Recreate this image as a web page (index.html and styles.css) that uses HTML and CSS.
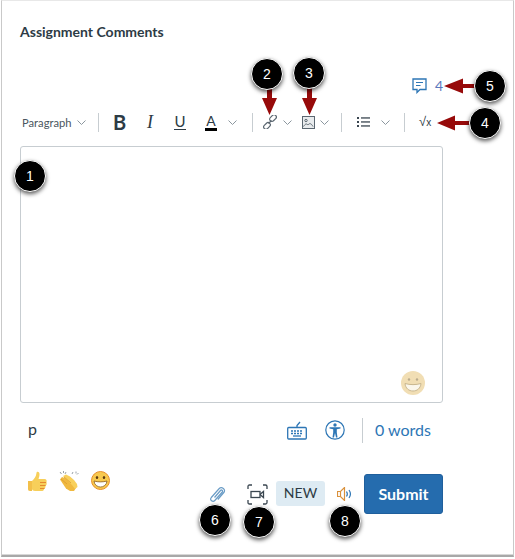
FILE: index.html
```html
<!DOCTYPE html>
<html lang="en">

<head>
    <meta charset="UTF-8">
    <title>Assignment Comments</title>
    <link rel="stylesheet" href="styles.css">
</head>

<body>
    <div class="panel">
        <h2 class="title">Assignment Comments</h2>

        <div class="count-row">
            <svg class="comment-icon" width="15" height="16" viewBox="0 0 15 16">
                <path d="M1 1h13v10.500H8l-3 3v-3H1z" fill="none" stroke="#2d76b5" stroke-width="1.300" />
                <path d="M4 4.500h7M4 7.500h4.500" stroke="#2d76b5" stroke-width="1.200" />
            </svg>
            <span class="count">4</span>
        </div>

        <div class="toolbar">
            <span class="format">Paragraph</span>
            <svg class="chev chev-format" width="9" height="5" viewBox="0 0 9 5"><path d="M.5.500l4 4 4-4" /></svg>
            <i class="sep sep-a"></i>
            <span class="tool-b">B</span>
            <span class="tool-i">I</span>
            <span class="tool-u">U</span>
            <span class="tool-a">A</span>
            <svg class="chev chev-a" width="9" height="5" viewBox="0 0 9 5"><path d="M.5.500l4 4 4-4" /></svg>
            <i class="sep sep-b"></i>
            <svg class="tool-link" width="14" height="14" viewBox="0 0 14 14" fill="none" stroke="#5a6670" stroke-width="1.200">
                <rect x="6.200" y=".8" width="7.500" height="4.500" rx="2.200" transform="rotate(-45 10 3)" />
                <rect x=".3" y="8.700" width="7.500" height="4.500" rx="2.200" transform="rotate(-45 4 11)" />
                <path d="M5.500 8.500l3-3" />
            </svg>
            <svg class="chev chev-link" width="9" height="5" viewBox="0 0 9 5"><path d="M.5.500l4 4 4-4" /></svg>
            <svg class="tool-image" width="13" height="13" viewBox="0 0 13 13" fill="none" stroke="#5a6670">
                <rect x=".5" y=".5" width="12" height="12" fill="#e8ebed" />
                <circle cx="4" cy="4.500" r="1.200" />
                <path d="M1.500 10.500c2-3 3-3 4.500-1.500 1.500-2 3-2 5 1.500" />
            </svg>
            <svg class="chev chev-image" width="9" height="5" viewBox="0 0 9 5"><path d="M.5.500l4 4 4-4" /></svg>
            <i class="sep sep-c"></i>
            <svg class="tool-list" width="13" height="10" viewBox="0 0 13 10" fill="#3a4650">
                <rect y="0" width="2" height="2" /><rect x="4" y=".3" width="9" height="1.300" />
                <rect y="4" width="2" height="2" /><rect x="4" y="4.300" width="9" height="1.300" />
                <rect y="8" width="2" height="2" /><rect x="4" y="8.300" width="9" height="1.300" />
            </svg>
            <svg class="chev chev-list" width="9" height="5" viewBox="0 0 9 5"><path d="M.5.500l4 4 4-4" /></svg>
            <i class="sep sep-d"></i>
            <span class="tool-math">&radic;<small>x</small></span>
        </div>

        <div class="editor">
            <svg class="editor-emoji" width="24" height="24" viewBox="0 0 24 24">
                <circle cx="12" cy="12" r="12" fill="#f1deb4" />
                <circle cx="8" cy="8.500" r="1.200" fill="#b9ab8c" />
                <circle cx="16" cy="8.500" r="1.200" fill="#b9ab8c" />
                <path d="M4 12.500c5 1.500 11 1.500 16 0-.5 5-4 7.500-8 7.500s-7.500-2.500-8-7.500z" fill="#fbf7ec" stroke="#c9b78f" />
            </svg>
        </div>

        <div class="status">
            <span class="path">p</span>
            <svg class="keyboard" width="20" height="19" viewBox="0 0 20 19" fill="none" stroke="#2d76b5">
                <rect x=".7" y="6.500" width="18.600" height="11.500" rx="1" stroke-width="1.300" />
                <path d="M10 6.500V4.500L13 1" stroke-width="1.300" />
                <path d="M4 10h12M4 12.500h12" stroke-width="1.500" stroke-dasharray="2 1" />
                <path d="M6 15h8" stroke-width="1.300" />
            </svg>
            <svg class="access" width="20" height="20" viewBox="0 0 20 20">
                <circle cx="10" cy="10" r="9.200" fill="none" stroke="#2d76b5" stroke-width="1.200" />
                <circle cx="10" cy="5" r="1.700" fill="#2d76b5" />
                <path d="M4.500 7.200h11v1.300l-3.700.7v3.300l.7 5h-1.500L10 13l-1 4.500H7.500l.7-5V9.200L4.500 8.500z" fill="#2d76b5" />
            </svg>
            <i class="status-sep"></i>
            <span class="words">0 words</span>
        </div>

        <div class="actions">
            <div class="reactions">
                <svg width="20" height="21" viewBox="0 0 20 21">
                    <path d="M1 10h4v10H3c-1.500 0-2-1-2-2z" fill="#f3c04a" />
                    <path d="M5 10c2-2 4-4 4.500-8 0-2 3-1.500 3 1 0 2-.5 3.500-1 5h6c2 0 2.500 1.500 2 3 .5 2 0 3-1 4 0 1.500-.5 2.500-1.500 3 0 1.500-1 2-2.500 2H8c-1.500 0-3-1-3-2z" fill="#f7cf5a" />
                    <path d="M13 11.500h6M13 14.500h5.500M13 17.500h4.500" stroke="#e58a2e" stroke-width="1" />
                </svg>
                <svg width="20" height="20" viewBox="0 0 20 20">
                    <path d="M1 8.500L3 6l4 1.500 5 3.500 4 3 1 3-2 3h-4l-4-2.500z" fill="#f0b93f" />
                    <path d="M4 5l3-1.500 4 2 4 3.500 3 4 .5 3-2.500 2-3-4z" fill="#f8d05c" />
                    <path d="M2 8l6 5M5 6l7 6" stroke="#dd9a30" stroke-width=".8" fill="none" />
                    <path d="M1 1l1.500 2M4.500 0v2M7 1L6 3M14 1l-1 2M17 .5v2M19.500 2L18 3.500" stroke="#9aa2a8" stroke-width="1" />
                </svg>
                <svg width="19" height="19" viewBox="0 0 19 19">
                    <circle cx="9.500" cy="9.500" r="9" fill="#f8c94e" stroke="#e88f2c" />
                    <ellipse cx="6" cy="6.500" rx="1.200" ry="1.500" fill="#5c3a12" />
                    <ellipse cx="13" cy="6.500" rx="1.200" ry="1.500" fill="#5c3a12" />
                    <path d="M3 10c4 1.200 9 1.200 13 0-.3 4-3.500 6-6.500 6S3.300 14 3 10z" fill="#fff" stroke="#8a5a1c" stroke-width=".8" />
                </svg>
            </div>

            <div class="send">
                <svg class="clip" width="18" height="16" viewBox="0 0 18 16" fill="none" stroke="#6a9cc6" stroke-width="1.200">
                    <path d="M6.500 10.500l6-7c1-1.200 2.800.2 1.800 1.500l-7.500 8.500c-2 2.200-5.500-.5-3.500-3l7.500-8.500c3-3 7.500.5 5 3.500l-6 7" />
                </svg>
                <svg class="video" width="21" height="21" viewBox="0 0 21 21" fill="none" stroke="#3a4650" stroke-width="1.300">
                    <path d="M1 5V2.500C1 1.500 1.500 1 2.500 1H5M16 1h2.500c1 0 1.500.5 1.500 1.500V5M20 16v2.500c0 1-.5 1.500-1.500 1.500H16M5 20H2.500C1.500 20 1 19.500 1 18.500V16" />
                    <rect x="4" y="7.500" width="9" height="6" />
                    <path d="M13.500 10l3-2.500v6l-3-2.500z" />
                </svg>
                <span class="new-tag">NEW</span>
                <svg class="speaker" width="16" height="14" viewBox="0 0 16 14" fill="none" stroke-width="1.200">
                    <path d="M.5 4.500h3l4-4v13l-4-4h-3z" stroke="#d9913c" />
                    <path d="M3.500 4.500v5" stroke="#d9913c" />
                    <path d="M9.500 4.500c1 1.500 1 3.500 0 5M12 3c1.800 2.500 1.800 5.500 0 8" stroke="#2d76b5" />
                </svg>
                <button class="submit">Submit</button>
            </div>
        </div>

        <!-- callout arrows and numbers -->
        <svg class="arrows" width="513" height="556" viewBox="0 0 513 556" fill="#970a0a">
            <path d="M267 88h5v10h5l-7.500 17-7.500-17h5z" />
            <path d="M307 88h5v10h5l-7.500 17-7.500-17h5z" />
            <path d="M476 84v4h-13v5.500L444 86l19-7.500V84z" />
            <path d="M470 121v4h-15v5.500L437 123l18-7.500v5.500z" />
        </svg>
        <span class="mark mark-1">1</span>
        <span class="mark mark-2">2</span>
        <span class="mark mark-3">3</span>
        <span class="mark mark-4">4</span>
        <span class="mark mark-5">5</span>
        <span class="mark mark-6">6</span>
        <span class="mark mark-7">7</span>
        <span class="mark mark-8">8</span>
    </div>
</body>

</html>
```
FILE: styles.css
```css
* {
    box-sizing: border-box;
    margin: 0;
    padding: 0;
}

body {
    background-color: #fff;
    font-family: Lato, "Open Sans", sans-serif;
    color: #2d3b45;
}

.panel {
    position: relative;
    width: 513px;
    height: 557px;
    margin-left: 1px;
    padding: 23px 70px 0 18px;
    background-color: #fff;
    border: 1px solid #c9c9c9;
    border-top-color: #e8e8e8;
    border-bottom: 2px solid #a8a8a8;
    box-shadow: inset 0 -1px 0 #d8d8d8;
}

.title {
    height: 16px;
    font-size: 14px;
    line-height: 16px;
    font-weight: 700;
}

/* comment count */
.count-row {
    display: flex;
    justify-content: flex-end;
    align-items: center;
    gap: 8px;
    height: 17px;
    margin-top: 37px;
}

.comment-icon {
    display: block;
}

.count {
    font-size: 14px;
    line-height: 17px;
    color: #5c78bd;
}

/* toolbar */
.toolbar {
    display: flex;
    align-items: center;
    height: 22px;
    margin-top: 17px;
    margin-left: 2px;
}

.format {
    width: 49px;
    font-size: 11.200px;
    color: #4a5660;
    white-space: nowrap;
}

.chev {
    flex: none;
    fill: none;
    stroke: #8b969e;
}

.chev-format {
    margin-left: 6px;
}

.sep {
    flex: none;
    width: 1px;
    height: 19px;
    background-color: #c7cdd1;
}

.sep-a {
    margin-left: 12px;
}

.tool-b {
    margin-left: 14px;
    width: 12px;
    font-size: 20px;
    font-weight: 700;
    line-height: 22px;
}

.tool-i {
    margin-left: 20px;
    width: 10px;
    font-family: "Liberation Serif", serif;
    font-size: 18px;
    font-style: italic;
    line-height: 22px;
    text-align: center;
}

.tool-u {
    margin-left: 19px;
    width: 12px;
    font-size: 15px;
    line-height: 15px;
    text-align: center;
    border-bottom: 1px solid #2d3b45;
}

.tool-a {
    margin-left: 19px;
    width: 12px;
    font-size: 14px;
    font-weight: 400;
    line-height: 15px;
    text-align: center;
    border-bottom: 3px solid #000;
}

.chev-a {
    margin-left: 11px;
}

.sep-b {
    margin-left: 15px;
}

.tool-link {
    flex: none;
    margin-left: 10px;
}

.chev-link {
    margin-left: 6px;
}

.tool-image {
    flex: none;
    margin-left: 10px;
}

.chev-image {
    margin-left: 5px;
}

.sep-c {
    margin-left: 12px;
}

.tool-list {
    flex: none;
    margin-left: 15px;
}

.chev-list {
    margin-left: 11px;
}

.sep-d {
    margin-left: 14px;
}

.tool-math {
    margin-left: 14px;
    font-family: "Liberation Sans", sans-serif;
    font-size: 13px;
    line-height: 22px;
    white-space: nowrap;
}

.tool-math small {
    font-size: 10px;
}

/* editor */
.editor {
    display: flex;
    justify-content: flex-end;
    align-items: flex-end;
    height: 257px;
    margin-top: 13px;
    padding: 0 17px 7px 0;
    background-color: #fff;
    border: 1px solid #c7cdd1;
    border-radius: 3px;
}

.editor-emoji {
    display: block;
}

/* status row */
.status {
    display: flex;
    align-items: center;
    height: 26px;
    margin-top: 14px;
    padding-left: 8px;
}

.path {
    width: 259px;
    padding-bottom: 2px;
    font-size: 16px;
    line-height: 20px;
}

.keyboard {
    flex: none;
}

.access {
    flex: none;
    margin-left: 18px;
}

.status-sep {
    flex: none;
    width: 1px;
    height: 25px;
    margin-left: 17px;
    background-color: #c7cdd1;
}

.words {
    margin-left: 12px;
    padding-bottom: 2px;
    font-size: 16px;
    color: #2d76b5;
    white-space: nowrap;
}

/* bottom row */
.actions {
    display: flex;
    justify-content: space-between;
    align-items: flex-start;
    margin-top: 30px;
}

.reactions {
    display: flex;
    gap: 12px;
    margin-left: 7px;
    margin-top: -2px;
}

.reactions svg {
    display: block;
}

.send {
    display: flex;
    align-items: flex-start;
    margin-top: 1px;
}

.clip {
    flex: none;
    margin-top: 13px;
}

.video {
    flex: none;
    margin-top: 10px;
    margin-left: 21px;
}

.new-tag {
    width: 49px;
    height: 25px;
    margin-top: 7px;
    margin-left: 8px;
    font-size: 14px;
    line-height: 23px;
    text-align: center;
    background-color: #deebf3;
    border-radius: 3px;
}

.speaker {
    flex: none;
    margin-top: 13px;
    margin-left: 12px;
}

.submit {
    width: 79px;
    height: 40px;
    margin-left: 11px;
    padding-bottom: 2px;
    font-family: Lato, "Open Sans", sans-serif;
    font-size: 16px;
    font-weight: 700;
    color: #fff;
    background-color: #256cae;
    border: 1px solid #1f5f9c;
    border-radius: 3px;
}

/* callouts over the page */
.arrows {
    position: absolute;
    left: -2px;
    top: -1px;
}

.mark {
    position: absolute;
    width: 32px;
    height: 32px;
    font-family: "Liberation Sans", sans-serif;
    font-size: 14px;
    line-height: 30px;
    text-align: center;
    color: #fff;
    background-color: #000;
    border: 1px solid #fff;
    border-radius: 50%;
    box-shadow: 0 2px 4px rgba(0, 0, 0, .65);
}

.mark-1 { left: 12px; top: 159px; }
.mark-2 { left: 249px; top: 57px; }
.mark-3 { left: 291px; top: 56px; }
.mark-4 { left: 467px; top: 106px; }
.mark-5 { left: 472px; top: 69px; }
.mark-6 { left: 197px; top: 503px; }
.mark-7 { left: 241px; top: 505px; }
.mark-8 { left: 327px; top: 504px; }
```
